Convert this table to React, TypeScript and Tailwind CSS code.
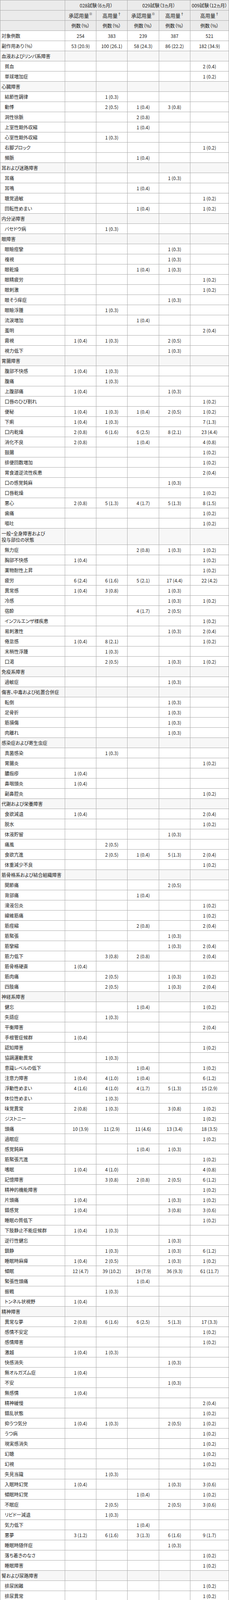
import React from 'react';

// section = string, item = [label, c1..c5] with values like "1 0.4" -> "1 (0.4)"
type Row = string | string[];

const ROWS: Row[] = [
  '血液およびリンパ系障害',
  ['貧血', '', '', '', '', '2 0.4'],
  ['単球増加症', '', '', '', '', '1 0.2'],
  '心臓障害',
  ['結節性調律', '', '1 0.3'],
  ['動悸', '', '2 0.5', '1 0.4', '3 0.8'],
  ['洞性徐脈', '', '', '2 0.8'],
  ['上室性期外収縮', '', '', '1 0.4'],
  ['心室性期外収縮', '', '1 0.3'],
  ['右脚ブロック', '', '', '', '', '1 0.2'],
  ['頻脈', '', '', '1 0.4'],
  '耳および迷路障害',
  ['耳痛', '', '', '', '1 0.3'],
  ['耳鳴', '', '', '1 0.4'],
  ['聴覚過敏', '', '', '', '', '1 0.2'],
  ['回転性めまい', '', '', '1 0.4', '', '1 0.2'],
  '内分泌障害',
  ['バセドウ病', '', '1 0.3'],
  '眼障害',
  ['眼瞼痙攣', '', '', '', '1 0.3'],
  ['複視', '', '', '', '1 0.3'],
  ['眼乾燥', '', '', '1 0.4', '1 0.3'],
  ['眼精疲労', '', '', '', '', '1 0.2'],
  ['眼刺激', '', '', '', '', '1 0.2'],
  ['眼そう痒症', '', '', '', '1 0.3'],
  ['眼瞼浮腫', '', '1 0.3'],
  ['流涙増加', '', '', '1 0.4'],
  ['羞明', '', '', '', '', '2 0.4'],
  ['霧視', '1 0.4', '1 0.3', '', '2 0.5'],
  ['視力低下', '', '', '', '1 0.3'],
  '胃腸障害',
  ['腹部不快感', '1 0.4', '1 0.3'],
  ['腹痛', '', '1 0.3'],
  ['上腹部痛', '1 0.4', '', '', '1 0.3'],
  ['口唇のひび割れ', '', '', '', '', '1 0.2'],
  ['便秘', '1 0.4', '1 0.3', '1 0.4', '2 0.5', '1 0.2'],
  ['下痢', '1 0.4', '1 0.3', '', '', '7 1.3'],
  ['口内乾燥', '2 0.8', '6 1.6', '6 2.5', '8 2.1', '23 4.4'],
  ['消化不良', '2 0.8', '', '1 0.4', '', '4 0.8'],
  ['鼓腸', '', '', '', '', '1 0.2'],
  ['排便回数増加', '', '', '', '', '1 0.2'],
  ['胃食道逆流性疾患', '', '', '', '', '2 0.4'],
  ['口の感覚鈍麻', '', '', '', '1 0.3'],
  ['口唇乾燥', '', '', '', '', '1 0.2'],
  ['悪心', '2 0.8', '5 1.3', '4 1.7', '5 1.3', '8 1.5'],
  ['歯痛', '', '', '', '', '1 0.2'],
  ['嘔吐', '', '', '', '', '1 0.2'],
  '一般・全身障害および\n投与部位の状態',
  ['無力症', '', '', '2 0.8', '1 0.3', '1 0.2'],
  ['胸部不快感', '1 0.4', '', '', '', '1 0.2'],
  ['薬物耐性上昇', '', '', '', '', '1 0.2'],
  ['疲労', '6 2.4', '6 1.6', '5 2.1', '17 4.4', '22 4.2'],
  ['異常感', '1 0.4', '3 0.8', '', '1 0.3'],
  ['冷感', '', '', '', '1 0.3', '1 0.2'],
  ['宿酔', '', '', '4 1.7', '2 0.5'],
  ['インフルエンザ様疾患', '', '', '', '', '1 0.2'],
  ['易刺激性', '', '', '', '1 0.3', '2 0.4'],
  ['倦怠感', '1 0.4', '8 2.1', '', '', '1 0.2'],
  ['末梢性浮腫', '', '1 0.3'],
  ['口渇', '', '2 0.5', '', '1 0.3', '1 0.2'],
  '免疫系障害',
  ['過敏症', '', '', '', '1 0.3'],
  '傷害、中毒および処置合併症',
  ['転倒', '', '', '', '1 0.3'],
  ['足骨折', '', '', '', '1 0.3'],
  ['筋損傷', '', '', '', '1 0.3'],
  ['肉離れ', '', '', '', '1 0.3'],
  '感染症および寄生虫症',
  ['真菌感染', '', '1 0.3'],
  ['胃腸炎', '', '', '', '', '1 0.2'],
  ['膿痂疹', '1 0.4'],
  ['鼻咽頭炎', '1 0.4'],
  ['副鼻腔炎', '', '', '', '', '1 0.2'],
  '代謝および栄養障害',
  ['食欲減退', '1 0.4', '', '', '', '2 0.4'],
  ['脱水', '', '', '', '', '1 0.2'],
  ['体液貯留', '', '', '', '1 0.3'],
  ['痛風', '', '2 0.5'],
  ['食欲亢進', '', '2 0.5', '1 0.4', '5 1.3', '2 0.4'],
  ['体重減少不良', '', '', '', '', '1 0.2'],
  '筋骨格系および結合組織障害',
  ['関節痛', '', '', '', '2 0.5'],
  ['背部痛', '', '', '1 0.4'],
  ['滑液包炎', '', '', '', '', '1 0.2'],
  ['線維筋痛', '', '', '', '', '1 0.2'],
  ['筋痙縮', '', '', '2 0.8', '', '2 0.4'],
  ['筋緊張', '', '', '', '1 0.3'],
  ['筋攣縮', '', '', '', '1 0.3', '2 0.4'],
  ['筋力低下', '', '3 0.8', '2 0.8', '', '2 0.4'],
  ['筋骨格硬直', '1 0.4'],
  ['筋肉痛', '', '2 0.5', '', '1 0.3', '1 0.2'],
  ['四肢痛', '', '2 0.5', '', '1 0.3', '2 0.4'],
  '神経系障害',
  ['健忘', '', '', '1 0.4', '', '1 0.2'],
  ['失語症', '', '1 0.3'],
  ['平衡障害', '', '', '', '', '2 0.4'],
  ['手根管症候群', '1 0.4'],
  ['認知障害', '', '', '', '', '1 0.2'],
  ['協調運動異常', '', '1 0.3'],
  ['意識レベルの低下', '', '', '1 0.4', '', '1 0.2'],
  ['注意力障害', '1 0.4', '4 1.0', '1 0.4', '', '6 1.2'],
  ['浮動性めまい', '4 1.6', '4 1.0', '4 1.7', '5 1.3', '15 2.9'],
  ['体位性めまい', '', '1 0.3'],
  ['味覚異常', '2 0.8', '1 0.3', '', '3 0.8', '1 0.2'],
  ['ジストニー', '', '', '', '', '1 0.2'],
  ['頭痛', '10 3.9', '11 2.9', '11 4.6', '13 3.4', '18 3.5'],
  ['過眠症', '', '', '', '', '1 0.2'],
  ['感覚鈍麻', '', '', '1 0.4', '1 0.3'],
  ['筋緊張亢進', '', '', '', '', '1 0.2'],
  ['嗜眠', '1 0.4', '4 1.0', '', '', '4 0.8'],
  ['記憶障害', '', '3 0.8', '2 0.8', '2 0.5', '6 1.2'],
  ['精神的機能障害', '', '', '', '', '1 0.2'],
  ['片頭痛', '1 0.4', '', '', '1 0.3', '1 0.2'],
  ['錯感覚', '1 0.4', '', '', '3 0.8', '3 0.6'],
  ['睡眠の質低下', '', '', '', '', '1 0.2'],
  ['下肢静止不能症候群', '1 0.4', '1 0.3'],
  ['逆行性健忘', '', '', '', '1 0.3'],
  ['鎮静', '', '1 0.3', '', '1 0.3', '6 1.2'],
  ['睡眠時麻痺', '1 0.4', '2 0.5', '', '1 0.3', '1 0.2'],
  ['傾眠', '12 4.7', '39 10.2', '19 7.9', '36 9.3', '61 11.7'],
  ['緊張性頭痛', '', '', '1 0.4'],
  ['振戦', '', '1 0.3'],
  ['トンネル状視野', '1 0.4'],
  '精神障害',
  ['異常な夢', '2 0.8', '6 1.6', '6 2.5', '5 1.3', '17 3.3'],
  ['感情不安定', '', '', '', '', '1 0.2'],
  ['感情障害', '', '', '', '', '1 0.2'],
  ['激越', '1 0.4', '1 0.3'],
  ['快感消失', '', '', '', '1 0.3'],
  ['無オルガズム症', '1 0.4'],
  ['不安', '', '', '', '1 0.3'],
  ['無感情', '1 0.4'],
  ['精神緩慢', '', '', '', '', '2 0.4'],
  ['錯乱状態', '', '', '', '', '1 0.2'],
  ['抑うつ気分', '1 0.4', '1 0.3', '', '2 0.5', '1 0.2'],
  ['うつ病', '', '', '', '', '1 0.2'],
  ['現実感消失', '', '', '', '', '1 0.2'],
  ['幻聴', '', '', '', '', '1 0.2'],
  ['幻視', '', '', '', '', '1 0.2'],
  ['失見当識', '', '1 0.3'],
  ['入眠時幻覚', '1 0.4', '', '', '1 0.3', '3 0.6'],
  ['傾眠時幻覚', '', '', '1 0.4', '', '1 0.2'],
  ['不眠症', '', '2 0.5', '', '2 0.5', '3 0.6'],
  ['リビドー減退', '', '1 0.3'],
  ['気力低下', '', '', '1 0.4'],
  ['悪夢', '3 1.2', '6 1.6', '3 1.3', '6 1.6', '9 1.7'],
  ['睡眠時随伴症', '', '', '', '1 0.3'],
  ['落ち着きのなさ', '', '', '', '', '1 0.2'],
  ['睡眠障害', '', '', '', '', '1 0.2'],
  '腎および尿路障害',
  ['排尿困難', '', '', '', '', '1 0.2'],
  ['排尿異常', '', '', '', '', '1 0.2'],
  ['夜間頻尿', '', '', '', '', '1 0.2'],
  ['膿尿', '', '', '1 0.4'],
  '生殖系および乳房障害',
  ['月経困難症', '', '', '', '', '1 0.2'],
  ['勃起不全', '', '', '', '', '1 0.2'],
  ['不正子宮出血', '', '', '', '', '1 0.2'],
  '呼吸器、胸郭および縦隔障害',
  ['咳嗽', '', '', '', '', '1 0.2'],
  ['咽喉乾燥', '1 0.4'],
  ['口腔咽頭痛', '', '1 0.3'],
  ['肺障害', '', '', '', '', '1 0.2'],
  ['鼻閉', '', '', '', '', '1 0.2'],
  ['副鼻腔うっ血', '', '', '', '', '1 0.2'],
  ['いびき', '', '', '1 0.4'],
  '皮膚および皮下組織障害',
  ['ざ瘡', '', '', '', '1 0.3', '1 0.2'],
  ['脱毛症', '1 0.4'],
  ['冷汗', '', '', '', '1 0.3'],
  ['アレルギー性皮膚炎', '1 0.4', '', '', '1 0.3'],
  ['皮膚乾燥', '', '', '1 0.4'],
  ['湿疹', '1 0.4'],
  ['毛質異常', '', '', '', '1 0.3'],
  ['多汗症', '', '1 0.3', '', '1 0.3'],
  ['寝汗', '', '', '', '', '1 0.2'],
  ['そう痒症', '', '', '2 0.8', '', '2 0.4'],
  ['発疹', '', '', '1 0.4', '1 0.3', '3 0.6'],
  ['斑状皮疹', '', '', '1 0.4'],
  ['酒さ', '', '', '', '1 0.3'],
  ['裂毛', '', '', '', '1 0.3'],
  '血管障害',
  ['ほてり', '', '', '', '', '1 0.2'],
  ['高血圧', '', '', '1 0.4', '1 0.3'],
  ['低血圧', '', '', '', '', '1 0.2'],
  '臨床検査',
  ['ALT(アラニン・アミノトランス\nフェラーゼ)増加', '1 0.4', '2 0.5', '1 0.4', '2 0.5', '2 0.4'],
  ['AST(アスパラギン酸・\nアミノトランスフェラーゼ)増加', '2 0.8', '2 0.5', '', '2 0.5', '2 0.4'],
  ['細菌検査陽性', '1 0.4', '1 0.3'],
  ['血中ALP(アルカリ・ホスファ\nターゼ)増加', '', '1 0.3'],
  ['血中ビリルビン増加', '1 0.4', '1 0.3'],
  ['血中カルシウム増加', '', '', '', '', '1 0.2'],
  ['血中CPK(クレアチン・ホスホ\nキナーゼ)増加', '1 0.4', '2 0.5', '2 0.8', '1 0.3', '1 0.2'],
  ['血中ブドウ糖増加', '', '1 0.3'],
  ['血中LDH(乳酸脱水素酵素)\n減少', '', '', '', '', '1 0.2'],
  ['血中LDH(乳酸脱水素酵素)\n増加', '', '', '1 0.4'],
  ['血中マグネシウム増加', '', '', '', '', '1 0.2'],
  ['血圧上昇', '', '1 0.3'],
  ['血中尿酸増加', '', '1 0.3'],
  ['腎クレアチニン・クリアランス\n増加', '', '', '1 0.4'],
  ['心電図QT延長', '', '', '1 0.4', '1 0.3'],
  ['γ-GTP(グルタミル・トランス\nフェラーゼ)増加', '', '1 0.3'],
  ['心電図異常', '', '', '', '', '1 0.2'],
  ['全身健康状態異常', '', '', '', '', '1 0.2'],
  ['リパーゼ増加', '', '', '', '', '1 0.2'],
  ['心拍数増加', '', '', '', '1 0.3'],
  ['リンパ球数増加', '', '2 0.5'],
  ['リンパ球百分率増加', '', '1 0.3'],
  ['好中球数減少', '1 0.4', '2 0.5'],
  ['好中球百分率減少', '', '1 0.3'],
  ['体重減少', '', '', '', '', '1 0.2'],
  ['体重増加', '1 0.4', '2 0.5', '1 0.4', '1 0.3', '5 1.0'],
  ['白血球数減少', '1 0.4'],
];

const fmt = (v?: string) => {
  if (!v) return '';
  const [n, p] = v.split(' ');
  return p ? `${n} (${p})` : n;
};

const grid = 'grid grid-cols-[166px_80px_80px_81px_80px_99px]';
const cell = 'flex items-center border-r border-b border-[#aaaaaa] overflow-hidden';
const num = `${cell} justify-center whitespace-nowrap`;
const head = `${cell} justify-center bg-[#ebebeb] h-[26px] whitespace-nowrap`;

const App: React.FC = () => {
  return (
    <div className="w-[587px] bg-white text-[#222] text-[12px] leading-[16px] [font-family:'Noto_Sans_CJK_JP','Noto_Sans',sans-serif] [font-feature-settings:'palt']">
      <div className="border-l border-t border-[#aaaaaa]">
        {/* header */}
        <div className={grid}>
          <div className={head}></div>
          <div className={`${head} col-span-2`}>028試験（6ヵ月）</div>
          <div className={`${head} col-span-2`}>029試験（3ヵ月）</div>
          <div className={head}>009試験（12ヵ月）</div>
        </div>
        <div className={grid}>
          <div className={head}></div>
          {['承認用量', '高用量', '承認用量', '高用量', '高用量'].map((t, i) => (
            <div key={i} className={`${head} text-[13px]`}>
              <span>{t}</span>
              <span className="text-[9px] leading-[9px] self-start mt-[4px]">{t === '承認用量' ? '※' : '†'}</span>
            </div>
          ))}
        </div>
        <div className={grid}>
          <div className={head}></div>
          {[0, 1, 2, 3, 4].map((i) => (
            <div key={i} className={head}>例数（%）</div>
          ))}
        </div>

        {/* totals */}
        <div className={grid}>
          <div className={`${cell} h-[26px] pl-[3px]`}>対象例数</div>
          {['254', '383', '239', '387', '521'].map((v, i) => (
            <div key={i} className={num}>{v}</div>
          ))}
        </div>
        <div className={grid}>
          <div className={`${cell} h-[26px] pl-[3px]`}>副作用あり（%）</div>
          {['53 20.9', '100 26.1', '58 24.3', '86 22.2', '182 34.9'].map((v, i) => (
            <div key={i} className={num}>{fmt(v)}</div>
          ))}
        </div>

        {ROWS.map((row, idx) => {
          if (typeof row === 'string') {
            const tall = row.includes('\n');
            return (
              <div key={idx} className={`${grid} bg-[#f7f7f7]`}>
                <div className={`${cell} ${tall ? 'h-[42px]' : 'h-[26px]'} pl-[3px] whitespace-pre`}>{row}</div>
                {[0, 1, 2, 3, 4].map((i) => (
                  <div key={i} className={cell}></div>
                ))}
              </div>
            );
          }
          const [label, ...vals] = row;
          const tall = label.includes('\n');
          return (
            <div key={idx} className={grid}>
              <div className={`${cell} ${tall ? 'h-[42px]' : 'h-[26px]'} pl-[11px] whitespace-pre`}>{label}</div>
              {[0, 1, 2, 3, 4].map((i) => (
                <div key={i} className={num}>{fmt(vals[i])}</div>
              ))}
            </div>
          );
        })}
      </div>
    </div>
  );
};

export default App;
